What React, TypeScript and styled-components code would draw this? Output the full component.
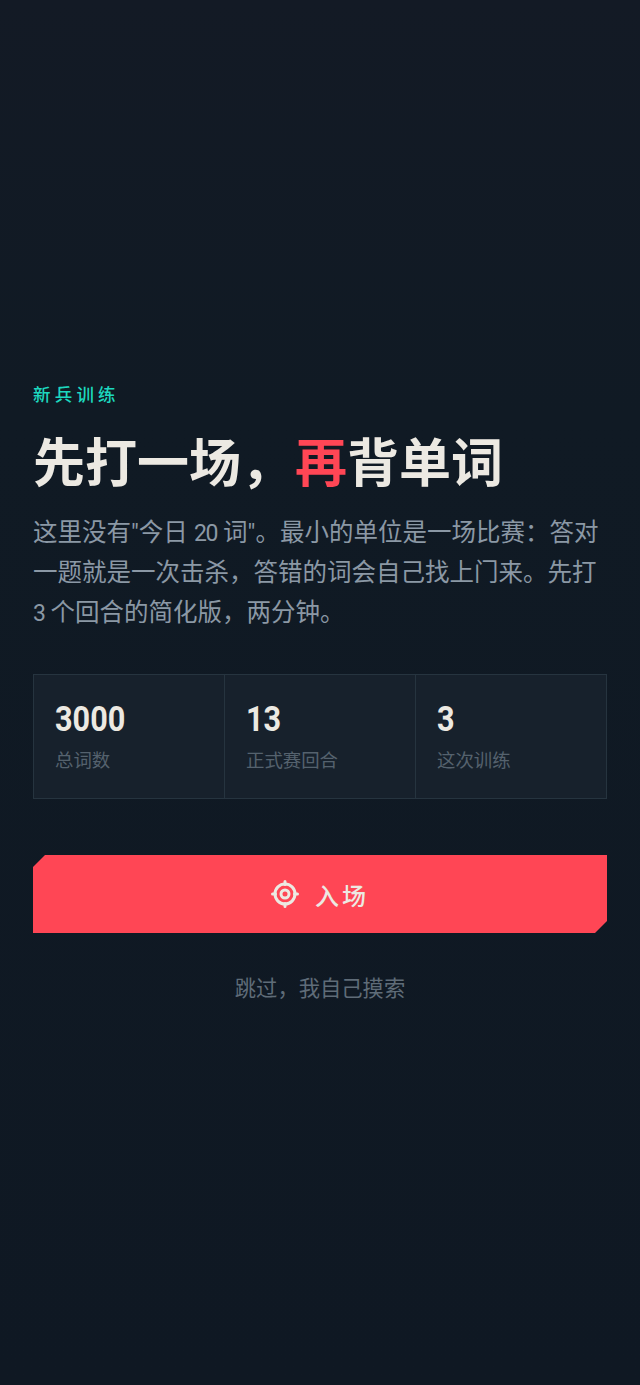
import React from "react";
import styled, { createGlobalStyle } from "styled-components";

const Global = createGlobalStyle`
  html, body { margin: 0; padding: 0; background: #0f1823; }
  * { box-sizing: border-box; }
`;

const Page = styled.main`
  width: 640px;
  height: 1385px;
  padding: 1px 33px 0;
  display: flex;
  flex-direction: column;
  justify-content: center;
  background: linear-gradient(180deg, #131a25 0%, #101a24 30%, #0f1823 100%);
  font-family: "Noto Sans CJK SC", "Noto Sans", sans-serif;
`;

const Eyebrow = styled.div`
  font-size: 17.5px;
  line-height: 20px;
  letter-spacing: 4.2px;
  font-weight: 500;
  color: #1dd8bf;
`;

const Title = styled.h1`
  margin: 22px 0 0;
  font-size: 52px;
  line-height: 68px;
  font-weight: 700;
  color: #ece9e2;
  white-space: nowrap;
`;

const Accent = styled.span`
  margin-left: 2px;
  color: #ff4655;
`;

const Lead = styled.p`
  margin: 19px 0 0;
  font-family: Roboto, "Noto Sans CJK SC", sans-serif;
  font-size: 24.5px;
  line-height: 40px;
  color: #8b98a5;
`;

const LeadDigits = styled.span`
  font-size: 23px;
  line-height: 0;
  letter-spacing: -1.4px;
`;

const Stats = styled.section`
  margin-top: 41px;
  height: 125px;
  display: grid;
  grid-template-columns: 190px 191px 1fr;
  background: #17212c;
  border: 1px solid #26343f;
`;

const Stat = styled.div`
  padding: 23px 21px 0;
  & + & { border-left: 1px solid #26343f; }
`;

const StatValue = styled.div`
  font-family: Roboto, "Liberation Sans", sans-serif;
  font-size: 35px;
  line-height: 44px;
  font-weight: 700;
  color: #ece9e2;
  transform: scaleX(0.875);
  transform-origin: left center;
`;

const StatLabel = styled.div`
  margin-top: 4px;
  font-size: 18.4px;
  line-height: 26px;
  color: #55626e;
`;

const EnterButton = styled.button`
  margin-top: 56px;
  height: 78px;
  width: 100%;
  border: 0;
  display: flex;
  align-items: center;
  justify-content: center;
  gap: 16px;
  background: #ff4655;
  color: #ece9e2;
  font-family: inherit;
  font-size: 24px;
  font-weight: 500;
  letter-spacing: 3px;
  clip-path: polygon(12px 0, 100% 0, 100% calc(100% - 12px), calc(100% - 12px) 100%, 0 100%, 0 12px);
`;

const Skip = styled.div`
  margin-top: 39px;
  text-align: center;
  font-size: 21.3px;
  line-height: 30px;
  color: #5f6c78;
`;

const TargetIcon = () => (
  <svg width="28" height="28" viewBox="0 0 28 28" fill="none" stroke="currentColor" strokeWidth="3" strokeLinecap="round">
    <circle cx="14" cy="14" r="10" />
    <circle cx="14" cy="14" r="4" />
    <path d="M14 1.5V4.5M14 23.5v3M1.5 14H4.5M23.5 14h3" />
  </svg>
);

const stats = [
  { value: "3000", label: "总词数" },
  { value: "13", label: "正式赛回合" },
  { value: "3", label: "这次训练" },
];

export default function App() {
  return (
    <Page>
      <Global />
      <Eyebrow>新兵训练</Eyebrow>
      <Title>
        先打一场，<Accent>再</Accent>背单词
      </Title>
      <Lead>
        这里没有"今日 <LeadDigits>20</LeadDigits> 词"。最小的单位是一场比赛：答对一题就是一次击杀，答错的词会自己找上门来。先打 <LeadDigits>3</LeadDigits> 个回合的简化版，两分钟。
      </Lead>
      <Stats>
        {stats.map((s) => (
          <Stat key={s.label}>
            <StatValue>{s.value}</StatValue>
            <StatLabel>{s.label}</StatLabel>
          </Stat>
        ))}
      </Stats>
      <EnterButton>
        <TargetIcon />
        入场
      </EnterButton>
      <Skip>跳过，我自己摸索</Skip>
    </Page>
  );
}
